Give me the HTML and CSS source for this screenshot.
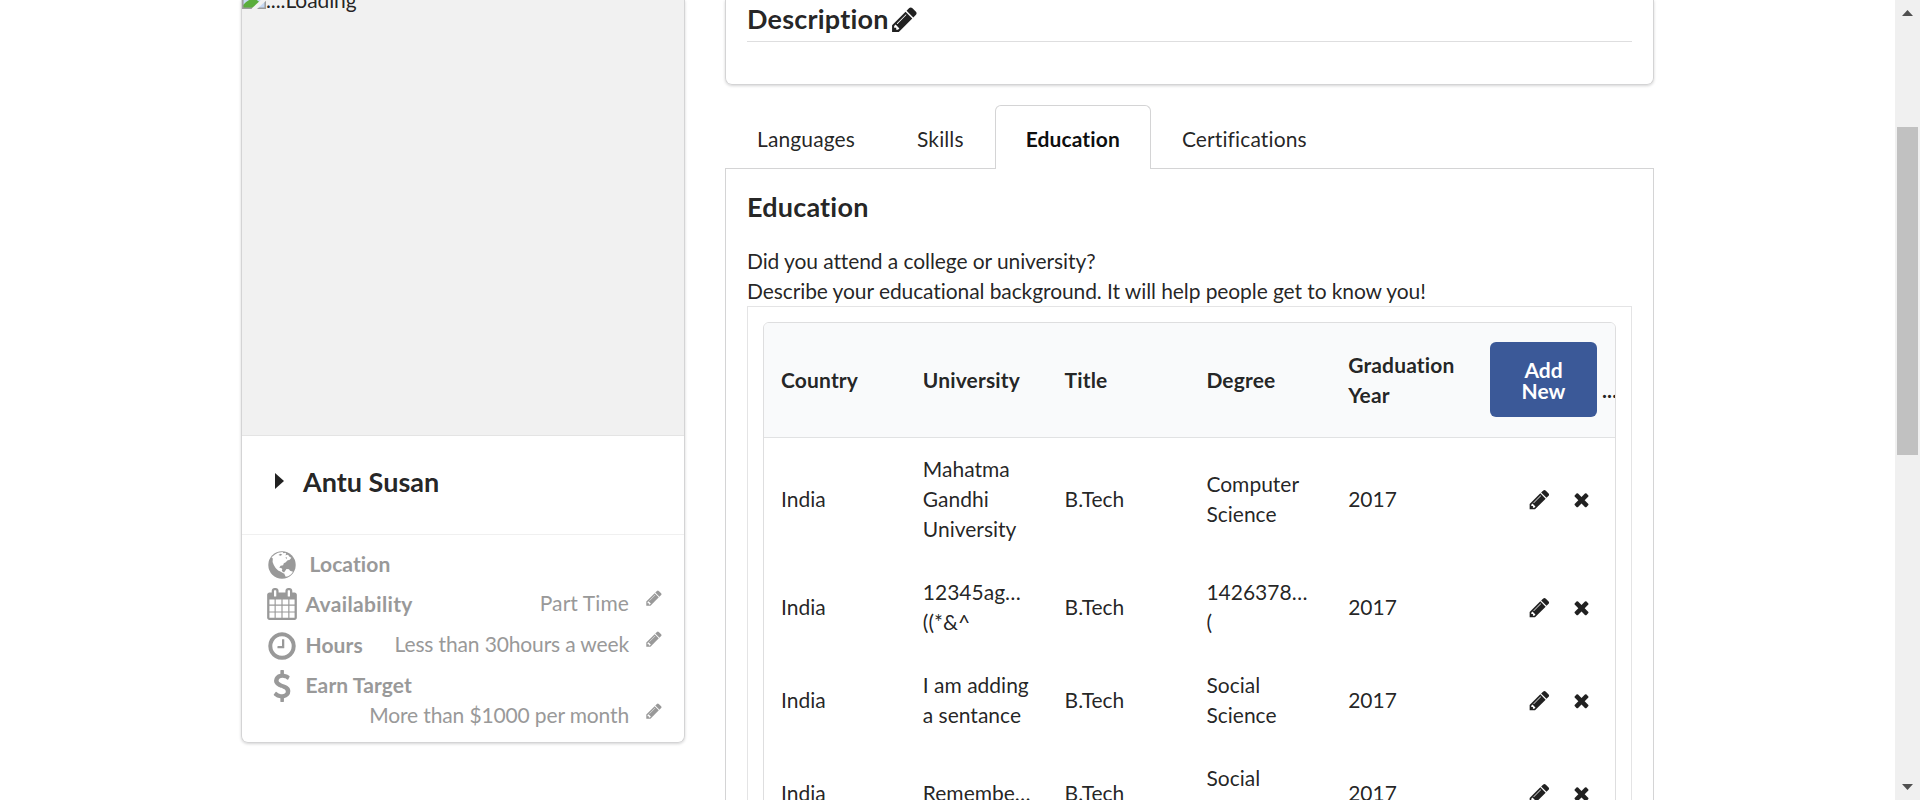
FILE: index.html
```html
<!DOCTYPE html>
<html lang="en">
<head>
<meta charset="utf-8">
<title>Profile</title>
<link rel="stylesheet" href="styles.css">
</head>
<body>
<svg class="defs" width="0" height="0">
  <symbol id="pencil" viewBox="0 0 1792 1792"><path d="M491 1536l91-91-235-235-91 91v107h128v128h107zm523-928q0-22-22-22-10 0-17 7l-542 542q-7 7-7 17 0 22 22 22 10 0 17-7l542-542q7-7 7-17zm-54-192l416 416-832 832h-416v-416zm683 96q0 53-37 90l-166 166-416-416 166-165q36-38 90-38 53 0 91 38l235 234q37 39 37 91z"/></symbol>
  <symbol id="remove" viewBox="0 0 1792 1792"><path d="M1490 1322q0 40-28 68l-136 136q-28 28-68 28t-68-28l-294-294-294 294q-28 28-68 28t-68-28l-136-136q-28-28-28-68t28-68l294-294-294-294q-28-28-28-68t28-68l136-136q28-28 68-28t68 28l294 294 294-294q28-28 68-28t68 28l136 136q28 28 28 68t-28 68l-294 294 294 294q28 28 28 68z"/></symbol>
</svg>
<div class="page">
  <main class="content">
    <aside class="card">
      <div class="photo">
        <svg class="broken" width="24" height="24" viewBox="0 0 24 24"><path fill="#c6d8f2" d="M1 1h22v22H1z"/><path fill="#5aad3c" d="M1 23v-3q10-11 17-2l-4 5z"/><path fill="none" stroke="#9a9a9a" stroke-width="1.5" d="M.8 0v23.2H24M23.2 0v24"/><path stroke="#f1f1f1" stroke-width="4" d="M11 25L25 12"/></svg><span>....Loading</span>
      </div>
      <div class="name"><svg class="caret" width="9" height="16" viewBox="0 0 9 16"><path d="M0 0l9 8-9 8z"/></svg><span>Antu Susan</span></div>
      <div class="meta">
        <div class="row location">
          <svg class="icon" viewBox="0 0 32 32"><circle cx="16" cy="16" r="13.7"/><path fill="#fff" d="M9 5.5l3-1.7 4.5-.8 1 1.2 2-.5.8 1.2-1 1.3 2.7-.5 1.5 2 1.8 1-1.5 2-2.5.7-1.5 1.8-2 1-.7 2-2.5.5-1.3 2 1.8.2 1.2 1.2-.5 1.8 1.5 1 1.5 1.2-1 .5-3.5-2-2.2-1.2-2.5-2.5-1.8-3-1.2-3 .2-3.4-1.3-1.3zM20.5 20l2.5.2 1 1.5 3 1-1.8 2.5-3 2-2.5.5-1.2-2.5-.5-1.8z"/><path fill="#999" d="M12.5 6l2-1.2 1.8 1-1.8 1zM19.5 8.2l1.6.4-.8 1.7z"/></svg>
          <b>Location</b>
        </div>
        <div class="row availability">
          <svg class="icon" viewBox="0 0 1792 1792"><path d="M192 1664h288v-288h-288v288zm352 0h320v-288h-320v288zm-352-352h288v-320h-288v320zm352 0h320v-320h-320v320zm-352-384h288v-288h-288v288zm736 736h320v-288h-320v288zm-384-736h320v-288h-320v288zm768 736h288v-288h-288v288zm-384-352h320v-320h-320v320zm-352-864v-288q0-13-9.5-22.5t-22.5-9.5h-64q-13 0-22.5 9.5t-9.5 22.5v288q0 13 9.5 22.5t22.5 9.5h64q13 0 22.5-9.5t9.5-22.5zm736 864h288v-320h-288v320zm-384-384h320v-288h-320v288zm384 0h288v-288h-288v288zm32-480v-288q0-13-9.5-22.5t-22.5-9.5h-64q-13 0-22.5 9.5t-9.5 22.5v288q0 13 9.5 22.5t22.5 9.5h64q13 0 22.5-9.5t9.5-22.5zm384-64v1280q0 52-38 90t-90 38h-1408q-52 0-90-38t-38-90v-1280q0-52 38-90t90-38h128v-96q0-66 47-113t113-47h64q66 0 113 47t47 113v96h384v-96q0-66 47-113t113-47h64q66 0 113 47t47 113v96h128q52 0 90 38t38 90z"/></svg>
          <b>Availability</b><span class="value">Part Time</span><svg class="edit"><use href="#pencil"/></svg>
        </div>
        <div class="row hours">
          <svg class="icon" viewBox="0 0 1792 1792"><path d="M1024 544v448q0 14-9 23t-23 9h-320q-14 0-23-9t-9-23v-64q0-14 9-23t23-9h224v-352q0-14 9-23t23-9h64q14 0 23 9t9 23zm416 352q0-148-73-273t-198-198-273-73-273 73-198 198-73 273 73 273 198 198 273 73 273-73 198-198 73-273zm224 0q0 209-103 385.5t-279.5 279.5-385.5 103-385.5-103-279.5-279.5-103-385.5 103-385.5 279.5-279.5 385.5-103 385.5 103 279.5 279.5 103 385.5z"/></svg>
          <b>Hours</b><span class="value">Less than 30hours a week</span><svg class="edit"><use href="#pencil"/></svg>
        </div>
        <div class="row earn">
          <svg class="icon" viewBox="0 0 1792 1792"><path d="M1362 1185q0 153-99.5 263.5t-258.5 136.5v175q0 14-9 23t-23 9h-135q-13 0-22.5-9.5t-9.5-22.5v-175q-66-9-127.5-31t-101.5-44.5-74-48-46.5-37.5-17.5-18q-17-21-2-41l103-135q7-10 23-12 15-2 24 9l2 2q113 99 243 125 37 8 74 8 81 0 142.5-43t61.5-122q0-28-15-53t-33.5-42-58.5-37.5-66-32-80-32.5q-39-16-61.5-25t-61.5-26.5-62.5-31-56.5-35.5-53.5-42.5-43.5-49-35.5-58-21-66.5-8.5-78q0-138 98-242t255-134v-180q0-13 9.5-22.5t22.5-9.5h135q14 0 23 9t9 23v176q57 6 110.5 23t87 33.5 63.5 37.5 39 29 15 14q17 18 5 38l-81 146q-8 15-23 16-14 3-27-7-3-3-14.5-12t-39-26.5-58.5-32-74.5-26-85.5-11.5q-95 0-155 43t-60 111q0 26 8.5 48t29.5 41.5 39.5 33 56 31 60.5 27 70 27.5q53 20 81 31.5t76 35 75.5 42.5 62 50 53 63.5 31.5 76.5 13 94z"/></svg>
          <b>Earn Target</b>
        </div>
        <div class="row amount"><span class="value">More than $1000 per month</span><svg class="edit"><use href="#pencil"/></svg></div>
      </div>
    </aside>
    <div class="main">
      <section class="description">
        <h3><span>Description</span><svg class="edit-lg"><use href="#pencil"/></svg></h3>
      </section>
      <nav class="tabs">
        <a class="tab">Languages</a><a class="tab">Skills</a><a class="tab active">Education</a><a class="tab">Certifications</a>
      </nav>
      <section class="panel">
        <h3>Education</h3>
        <p>Did you attend a college or university?<br>Describe your educational background. It will help people get to know you!</p>
        <div class="frame">
          <div class="table">
            <div class="tr head">
              <div>Country</div><div>University</div><div>Title</div><div>Degree</div><div>Graduation Year</div>
              <div class="add"><button class="button">Add New</button><span>...</span></div>
            </div>
            <div class="tr"><div>India</div><div>Mahatma Gandhi University</div><div>B.Tech</div><div>Computer Science</div><div>2017</div><div class="actions"><svg class="pen"><use href="#pencil"/></svg><svg class="del"><use href="#remove"/></svg></div></div>
            <div class="tr"><div>India</div><div>12345ag…<br>((*&amp;^</div><div>B.Tech</div><div>1426378…<br>(</div><div>2017</div><div class="actions"><svg class="pen"><use href="#pencil"/></svg><svg class="del"><use href="#remove"/></svg></div></div>
            <div class="tr"><div>India</div><div>I am adding<br>a sentance</div><div>B.Tech</div><div>Social Science</div><div>2017</div><div class="actions"><svg class="pen"><use href="#pencil"/></svg><svg class="del"><use href="#remove"/></svg></div></div>
            <div class="tr"><div>India</div><div>Remembe…</div><div>B.Tech</div><div>Social Science</div><div>2017</div><div class="actions"><svg class="pen"><use href="#pencil"/></svg><svg class="del"><use href="#remove"/></svg></div></div>
          </div>
        </div>
      </section>
    </div>
  </main>
  <div class="scrollbar">
    <svg width="11" height="6" viewBox="0 0 11 6"><path d="M0 6L5.5 0 11 6z"/></svg>
    <div class="thumb"></div>
    <svg class="down" width="11" height="6" viewBox="0 0 11 6"><path d="M0 0h11L5.5 6z"/></svg>
  </div>
</div>
</body>
</html>
```
FILE: styles.css
```css
* { box-sizing: border-box; }
body {
  margin: 0;
  height: 800px;
  overflow: hidden;
  background: #fff;
  color: rgba(0, 0, 0, .87);
  font: 21px/30px Lato, "Noto Sans", sans-serif;
  font-variant-ligatures: none;
}
svg { display: block; flex: none; fill: currentColor; }
.defs { display: none; }
.page { display: flex; height: 800px; }
.content {
  flex: 1;
  display: flex;
  align-items: flex-start;
  gap: 40px;
  height: 800px;
  padding-left: 241px;
  overflow: hidden;
}

/* profile card */
.card {
  width: 444px;
  height: 743px;
  border: 1px solid #d4d4d5;
  border-top: 0;
  border-radius: 0 0 7px 7px;
  box-shadow: 0 1px 3px #d4d4d5;
}
.photo {
  display: flex;
  height: 436px;
  background: #f1f1f1;
  border-bottom: 1px solid #e4e4e4;
  letter-spacing: -.1px;
}
.photo span, .broken { margin-top: -15px; }
.name {
  display: flex;
  height: 99px;
  padding: 37px 0 0 33px;
  border-bottom: 1px solid #f0f0f0;
  font-size: 27px;
  font-weight: 700;
  line-height: 36px;
}
.caret { margin-right: 19px; }
.name span { margin-top: -9px; }
.meta { padding-top: 14px; color: #999; }
.row { display: flex; height: 40.4px; padding: 0 21px 0 24px; }
.row b { letter-spacing: .1px; }
.availability b { letter-spacing: .35px; }
.icon { width: 32px; height: 32px; margin-right: 7.5px; }
.location .icon { margin: 0 11.5px 0 0; }
.availability .icon { margin-top: -1px; }
.earn { height: 30px; }
.value { margin-left: auto; letter-spacing: -.14px; }
.availability .value { letter-spacing: .1px; }
.availability .value, .hours .value { margin-top: -1px; }
.edit { width: 18px; height: 18px; margin: 0 0 0 16px; }
.hours .edit { margin-top: .5px; }
.amount .edit { margin-top: 2px; }

/* right column */
.main { width: 929px; }
.description {
  height: 85px;
  padding: 0 21px;
  border: 1px solid #d4d4d5;
  border-top: 0;
  border-radius: 0 0 7px 7px;
  box-shadow: 0 1px 3px #d4d4d5;
}
h3 { margin: 0; font-size: 27px; line-height: 36px; letter-spacing: .2px; }
.description h3 {
  display: flex;
  height: 42px;
  border-bottom: 1px solid #dededf;
}
.description span { padding-top: 1px; }
.edit-lg { width: 29px; height: 29px; margin: 5px 0 0 1px; }
.tabs {
  display: flex;
  height: 63px;
  margin-top: 20px;
  padding-left: 1px;
  letter-spacing: .12px;
}
.tab { padding: 19px 31px 0; }
.tab.active {
  height: 64px;
  padding: 18px 30px 0;
  border: 1px solid #d4d4d5;
  border-bottom: 0;
  border-radius: 6px 6px 0 0;
  background: #fff;
  color: rgba(0, 0, 0, .95);
  font-weight: 700;
}
.panel {
  height: 700px;
  padding: 20px 21px 0;
  border: 1px solid #d4d4d5;
}
.panel p { margin: 21px 0 0; letter-spacing: -.09px; }
.frame { height: 600px; padding: 15px; border: 1px solid #e4e4e5; }
.table {
  height: 580px;
  border: 1px solid #dededf;
  border-radius: 6px;
  overflow: hidden;
}
.tr {
  display: grid;
  grid-template-columns: repeat(6, 141.8px);
  align-items: center;
  padding: 16px 0 17px;
}
.tr > div { padding: 0 16px 0 17px; }
.head {
  height: 115px;
  padding: 0 0 1px;
  background: #f9fafb;
  border-bottom: 1px solid #e1e2e3;
  font-weight: 700;
  letter-spacing: .15px;
}
.tr > .add { display: flex; align-items: flex-end; gap: 5px; padding-right: 0; }
.add span { padding-bottom: 12px; }
.button {
  flex: none;
  width: 107px;
  height: 75px;
  padding: 0 30px;
  border: 0;
  border-radius: 6px;
  background: #3b5998;
  color: #fff;
  font: 700 21px/21px Lato, sans-serif;
}
.tr > .actions { display: flex; align-items: center; padding: 0 0 0 55px; }
.pen { width: 23px; height: 23px; }
.del { width: 21px; height: 21px; margin-left: 20px; }

/* page scrollbar */
.scrollbar {
  display: flex;
  flex-direction: column;
  align-items: center;
  width: 25px;
  padding: 10px 0;
  background: #f0f0f0;
  color: #505050;
}
.thumb { width: 21px; height: 328px; margin-top: 111px; background: #c1c1c1; }
.down { margin-top: auto; }
```
